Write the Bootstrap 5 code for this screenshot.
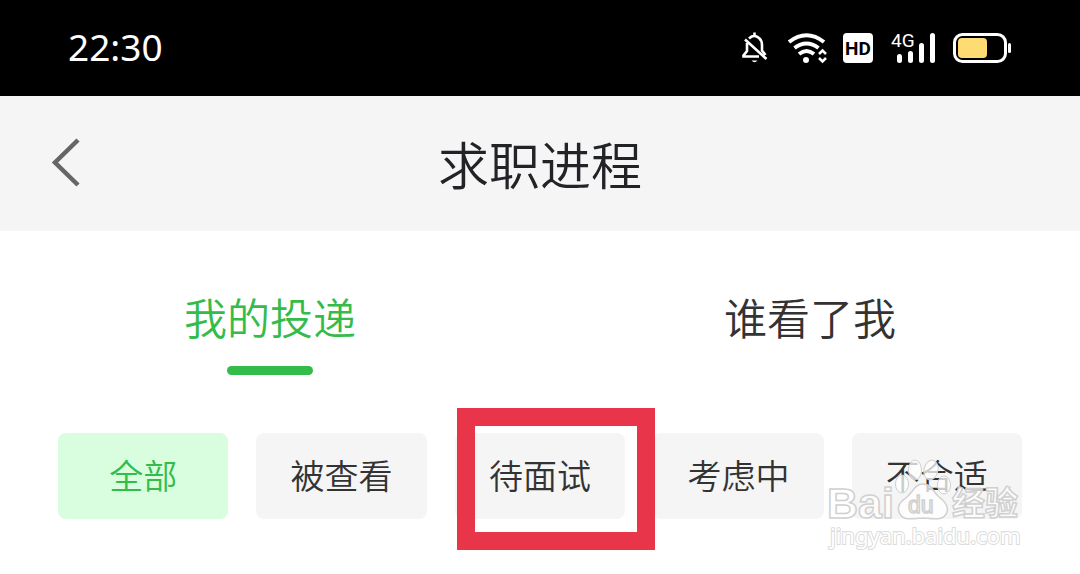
<!DOCTYPE html>
<html lang="zh-CN">
<head>
<meta charset="utf-8">
<meta name="viewport" content="width=device-width, initial-scale=1">
<title>求职进程</title>
<link href="https://cdn.jsdelivr.net/npm/bootstrap@5.3.0/dist/css/bootstrap.min.css" rel="stylesheet">
<style>
  body { font-family: "Noto Sans CJK SC", sans-serif; font-weight: 350; color: #333; background: #fff; }
  .status-bar { background: #000; color: #fff; height: 96px; padding: 0 68px; }
  .clock { font: 400 37px/48px "Noto Sans", sans-serif; padding-bottom: 2px; }
  .app-bar { background: #f5f5f5; height: 135px; padding: 0 48px 2px; }
  .app-bar h1 { font-size: 51px; line-height: 64px; font-weight: 350; color: #222327; }
  .back-btn { width: 36px; color: #666; }
  .tabs-row { padding-top: 53px; }
  .tab-btn { font-size: 43px; line-height: 64px; font-weight: 350; color: #333; border: 0; background: none; }
  .tab-btn::after { content: ""; display: block; width: 86px; height: 9px; margin: 18px auto 0; border-radius: 5px; }
  .tab-btn.active { color: #34bc4b; }
  .tab-btn.active::after { background: #34bc4b; }
  .chips { display: grid; grid-template-columns: repeat(5, 1fr); gap: 28px; padding: 58px 58px 56px; }
  .chip { height: 86px; font-size: 34px; font-weight: 350; line-height: 48px; color: #333; background: #f5f5f5; border: 0; border-radius: 8px; padding: 0 0 2px; }
  .chip.active { background: #d9fedf; color: #34bc4b; }
  .focus-frame { position: absolute; inset: -25px -30px -31px 2px; border: 18px solid #e93549; pointer-events: none; }
  .watermark { position: absolute; left: -26px; top: 24px; pointer-events: none; }
</style>
</head>
<body>
<div class="status-bar d-flex align-items-center justify-content-between">
  <span class="clock">22:30</span>
  <svg class="overflow-visible" width="272" height="32" viewBox="740 32 272 32" fill="none" stroke="#fff" role="img" aria-label="手机状态">
    <g stroke-width="2.600">
      <path d="M749 38.500Q754 33.500 759 38Q762 40.500 762 45V50.500L765.500 55M754.500 32.500V36M747 43V51L743.500 55.500V56.500H759M745 39.500L766.500 59"/>
      <path d="M751.500 60.500H757.500Q754.500 64 751.500 60.500Z" fill="#fff" stroke="none"/>
    </g>
    <g stroke-width="4">
      <path d="M789 42Q806.500 28.500 824 42M794.500 48Q806.500 39 818.500 48M799 54Q806.500 48 814 54"/>
      <circle cx="806" cy="60" r="3" fill="#fff" stroke="none"/>
      <path d="M819 54L822.500 50.500L826 54M819 58L822.500 61.500L826 58" stroke-width="2.500"/>
    </g>
    <rect x="843" y="33" width="30" height="30" rx="4" fill="#fff" stroke="none"/>
    <text x="858" y="55" text-anchor="middle" font-family="Roboto, sans-serif" font-size="19" font-weight="700" fill="#000" stroke="none">HD</text>
    <text x="891" y="47" font-family="Roboto, sans-serif" font-size="19" font-weight="400" fill="#fff" stroke="none">4G</text>
    <path d="M899.500 56.500V60.500M910.500 53.500V60.500M921.500 45.500V60.500M932.500 35.500V60.500" stroke-width="5" stroke-linecap="round"/>
    <rect x="954.500" y="34.500" width="51" height="27" rx="8" stroke-width="3"/>
    <rect x="958" y="38" width="29" height="20" rx="4" fill="#ffdc73" stroke="none"/>
    <path d="M1009.500 44.500V51.500" stroke-width="3" stroke-linecap="round"/>
  </svg>
</div>

<header class="app-bar d-flex align-items-center">
  <button type="button" class="back-btn btn p-0 border-0 text-start" aria-label="返回">
    <svg width="36" height="50" viewBox="0 0 36 50" fill="none" stroke="#666" stroke-width="4.500"><path d="M30 2L7 24.500L30 47"/></svg>
  </button>
  <h1 class="flex-grow-1 text-center m-0">求职进程</h1>
  <span class="back-btn"></span>
</header>

<main>
  <div class="tabs-row row g-0" role="tablist">
    <div class="col-6 text-center"><button type="button" class="tab-btn active p-0" role="tab" aria-selected="true">我的投递</button></div>
    <div class="col-6 text-center"><button type="button" class="tab-btn p-0" role="tab" aria-selected="false">谁看了我</button></div>
  </div>
  <div class="chips">
    <button type="button" class="chip active">全部</button>
    <button type="button" class="chip">被查看</button>
    <div class="position-relative d-grid z-1"><button type="button" class="chip">待面试</button><span class="focus-frame"></span></div>
    <button type="button" class="chip">考虑中</button>
    <div class="position-relative d-grid">
      <button type="button" class="chip">不合适</button>
      <svg class="watermark" width="200" height="100" viewBox="826 457 200 100" fill="#fff" fill-opacity=".75" stroke="#d0d0d0" stroke-width="1.500" role="img" aria-label="Baidu 经验">
        <g stroke-width="1">
          <ellipse cx="902" cy="484" rx="6.500" ry="9"/>
          <ellipse cx="915" cy="470" rx="6.500" ry="10"/>
          <ellipse cx="931" cy="470" rx="7" ry="10" transform="rotate(12 931 470)"/>
          <ellipse cx="944" cy="485" rx="6.500" ry="9"/>
          <path stroke-width="1.500" d="M923 484C915 484 913 492 907 497C900 502 897 506 899 512C902 521 911 519 923 518C935 519 944 521 947 512C949 506 944 501 938 496C932 490 931 484 923 484Z"/>
        </g>
        <g font-weight="700" stroke-width="1.500">
          <text x="827" y="518" font-family="Liberation Sans, sans-serif" font-size="43">Bai</text>
          <text x="908" y="513" font-family="Liberation Sans, sans-serif" font-size="23" font-weight="400">du</text>
          <text x="952" y="515" font-family="Noto Sans CJK SC, sans-serif" font-size="33">经验</text>
        </g>
        <text x="830" y="544" font-family="Noto Sans, sans-serif" font-size="22" font-weight="400" stroke-width="2" paint-order="stroke" fill-opacity="1" stroke="#dcdcdc">jingyan.baidu.com</text>
      </svg>
    </div>
  </div>
</main>
<script src="https://cdn.jsdelivr.net/npm/bootstrap@5.3.0/dist/js/bootstrap.bundle.min.js"></script>
</body>
</html>
